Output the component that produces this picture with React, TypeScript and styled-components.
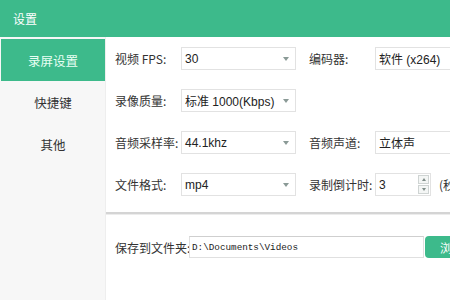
import styled, { createGlobalStyle } from "styled-components";

const GlobalStyle = createGlobalStyle`
  html, body {
    margin: 0;
    padding: 0;
    background: #ffffff;
  }
  body {
    font-family: "Liberation Sans", "Noto Sans CJK SC", sans-serif;
  }
`;

const GREEN = "#3dba8b";

const StyledWindow = styled.div`
  width: 450px;
  height: 300px;
  overflow: hidden;
  display: flex;
  flex-direction: column;
  background: #ffffff;
`;

const StyledHeader = styled.div`
  height: 37px;
  flex-shrink: 0;
  background: ${GREEN};
  color: #ffffff;
  font-family: "Noto Sans CJK SC", sans-serif;
  font-size: 12px;
  display: flex;
  align-items: center;
  padding-left: 13px;
`;

const StyledBody = styled.div`
  flex: 1;
  display: flex;
  min-height: 0;
`;

const StyledSidebar = styled.div`
  width: 104px;
  flex-shrink: 0;
  background: #f7f7f7;
  padding: 2px 0 0 1px;
  display: flex;
  flex-direction: column;
  border-right: 1px solid #eeeeee;
`;

const StyledNavItem = styled.div<{ $active?: boolean }>`
  height: 42px;
  display: flex;
  align-items: center;
  justify-content: center;
  font-family: "Noto Sans CJK SC", sans-serif;
  font-size: 12.5px;
  color: ${({ $active }) => ($active ? "#e8fff4" : "#333333")};
  background: ${({ $active }) => ($active ? GREEN : "transparent")};
`;

const StyledMain = styled.div`
  flex: 1;
  display: flex;
  flex-direction: column;
  min-width: 0;
`;

const StyledForm = styled.div`
  padding: 10px 0 0 9px;
  display: flex;
  flex-direction: column;
  gap: 19px;
`;

const StyledRow = styled.div`
  display: flex;
  align-items: center;
  height: 23px;
`;

const StyledLabel = styled.span<{ $offset?: number; $width?: number }>`
  width: ${({ $width }) => $width ?? 66}px;
  margin-left: ${({ $offset }) => $offset ?? 0}px;
  flex-shrink: 0;
  font-family: "Noto Sans CJK SC", sans-serif;
  font-size: 12px;
  color: #333333;
  white-space: nowrap;
`;

const StyledSelect = styled.div<{ $width?: number }>`
  width: ${({ $width }) => $width ?? 115}px;
  height: 23px;
  flex-shrink: 0;
  box-sizing: border-box;
  border: 1px solid #e2e2e2;
  background: #ffffff;
  display: flex;
  align-items: center;
  justify-content: space-between;
  padding: 0 6px 0 3px;
  font-size: 12px;
  color: #222222;
  white-space: nowrap;
`;

const StyledArrow = styled.span`
  width: 0;
  height: 0;
  border-left: 3.5px solid transparent;
  border-right: 3.5px solid transparent;
  border-top: 4px solid #8a9a96;
`;

const StyledSpinner = styled.div`
  width: 56px;
  height: 23px;
  flex-shrink: 0;
  box-sizing: border-box;
  border: 1px solid #e2e2e2;
  display: flex;
  align-items: center;
  justify-content: space-between;
  padding-left: 3px;
  font-size: 12px;
  color: #222222;
`;

const StyledStepper = styled.div`
  width: 11px;
  height: 19px;
  margin-right: 1px;
  display: flex;
  flex-direction: column;
  gap: 1px;
`;

const StyledStep = styled.div<{ $up?: boolean }>`
  flex: 1;
  border: 1px solid #cfd4d3;
  background: #f4f6f5;
  display: flex;
  align-items: center;
  justify-content: center;

  &::after {
    content: "";
    border-left: 2.5px solid transparent;
    border-right: 2.5px solid transparent;
    ${({ $up }) =>
      $up ? "border-bottom: 3px solid #7f8c88;" : "border-top: 3px solid #7f8c88;"}
  }
`;

const StyledUnit = styled.span`
  margin-left: 8px;
  font-family: "Noto Sans CJK SC", sans-serif;
  font-size: 12px;
  color: #333333;
  white-space: nowrap;
`;

const StyledDivider = styled.div`
  margin-top: 16px;
  height: 2px;
  background: #d4d4d4;
  border-bottom: 1px solid #ececec;
`;

const StyledSaveRow = styled.div`
  display: flex;
  align-items: center;
  height: 22px;
  margin-top: 21px;
  padding-left: 9px;
`;

const StyledPathInput = styled.div`
  width: 235px;
  height: 22px;
  flex-shrink: 0;
  box-sizing: border-box;
  border: 1px solid #e0e0e0;
  border-top-color: #cfcfcf;
  display: flex;
  align-items: center;
  padding-left: 2px;
  font-family: "Liberation Mono", monospace;
  font-size: 9.3px;
  color: #222222;
  white-space: nowrap;
`;

const StyledButton = styled.button`
  height: 22px;
  width: 60px;
  flex-shrink: 0;
  margin-left: 1px;
  border: 0;
  border-radius: 4px;
  background: ${GREEN};
  color: #ffffff;
  font-family: "Noto Sans CJK SC", sans-serif;
  font-size: 12px;
  text-align: left;
  padding-left: 15px;
`;

export default function App() {
  return (
    <>
      <GlobalStyle />
      <StyledWindow>
        <StyledHeader>设置</StyledHeader>
        <StyledBody>
          <StyledSidebar>
            <StyledNavItem $active>录屏设置</StyledNavItem>
            <StyledNavItem>快捷键</StyledNavItem>
            <StyledNavItem>其他</StyledNavItem>
          </StyledSidebar>
          <StyledMain>
            <StyledForm>
              <StyledRow>
                <StyledLabel>视频 FPS:</StyledLabel>
                <StyledSelect>
                  30
                  <StyledArrow />
                </StyledSelect>
                <StyledLabel $offset={13}>编码器:</StyledLabel>
                <StyledSelect $width={120}>软件 (x264)</StyledSelect>
              </StyledRow>
              <StyledRow>
                <StyledLabel>录像质量:</StyledLabel>
                <StyledSelect>
                  标准 1000(Kbps)
                  <StyledArrow />
                </StyledSelect>
              </StyledRow>
              <StyledRow>
                <StyledLabel>音频采样率:</StyledLabel>
                <StyledSelect>
                  44.1khz
                  <StyledArrow />
                </StyledSelect>
                <StyledLabel $offset={13}>音频声道:</StyledLabel>
                <StyledSelect $width={120}>立体声</StyledSelect>
              </StyledRow>
              <StyledRow>
                <StyledLabel>文件格式:</StyledLabel>
                <StyledSelect>
                  mp4
                  <StyledArrow />
                </StyledSelect>
                <StyledLabel $offset={13}>录制倒计时:</StyledLabel>
                <StyledSpinner>
                  3
                  <StyledStepper>
                    <StyledStep $up />
                    <StyledStep />
                  </StyledStepper>
                </StyledSpinner>
                <StyledUnit>(秒)</StyledUnit>
              </StyledRow>
            </StyledForm>
            <StyledDivider />
            <StyledSaveRow>
              <StyledLabel $width={74}>保存到文件夹:</StyledLabel>
              <StyledPathInput>D:\Documents\Videos</StyledPathInput>
              <StyledButton>浏览</StyledButton>
            </StyledSaveRow>
          </StyledMain>
        </StyledBody>
      </StyledWindow>
    </>
  );
}
